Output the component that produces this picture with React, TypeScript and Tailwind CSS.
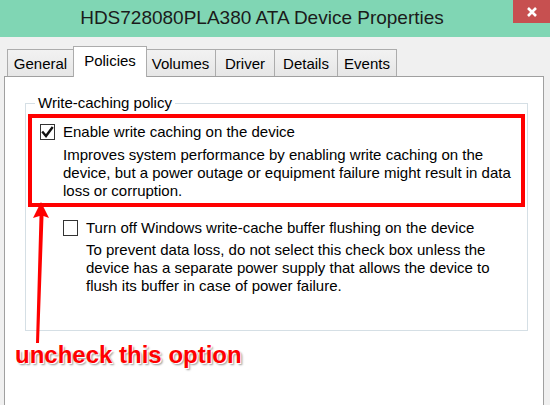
import React from "react";

const font = { fontFamily: '"Segoe UI", "Liberation Sans", Arial, sans-serif' };

function Tab({ label, active, w }: { label: string; active?: boolean; w: string }) {
  if (active) {
    return (
      <div
        className={`${w} h-[31px] -ml-px -mr-px z-10 bg-white border border-b-0 border-[#acacac] flex items-start justify-center pt-[3px] text-[15px] text-black`}
      >
        {label}
      </div>
    );
  }
  return (
    <div
      className={`${w} h-[28px] -ml-px border border-b-0 border-[#acacac] bg-gradient-to-b from-[#f2f2f2] to-[#e6e6e6] flex items-center justify-center pt-[1px] text-[15px] text-black`}
    >
      {label}
    </div>
  );
}

function CheckBox({ checked }: { checked?: boolean }) {
  return (
    <div className="w-[15px] h-[16px] border border-[#333] bg-white flex items-center justify-center shrink-0">
      {checked && (
        <svg width="13" height="13" viewBox="0 0 13 13">
          <path d="M2 6.5 L5 10 L11 2" fill="none" stroke="#111" strokeWidth="2.4" strokeLinecap="square" />
        </svg>
      )}
    </div>
  );
}

export default function App() {
  return (
    <div className="w-[550px] h-[405px] overflow-hidden bg-[#f0f0f0] relative flex flex-col" style={font}>
      {/* Title bar */}
      <div className="h-[37px] bg-[#80d6b4] flex items-center justify-center shrink-0 relative">
        <span className="text-[19px] text-[#1b1b1b] pr-[26px]">HDS728080PLA380 ATA Device Properties</span>
        <div className="absolute right-0 top-0 w-[37px] h-[23px] bg-[#c75050] flex items-center justify-center">
          <svg width="12" height="12" viewBox="0 0 12 12">
            <path d="M2 2 L10 10 M10 2 L2 10" stroke="#fff" strokeWidth="2.6" />
          </svg>
        </div>
      </div>

      <div className="flex-1 flex flex-col pt-[10px] pl-[4px] pr-[6px]">
        {/* Tabs */}
        <div className="flex items-end pl-[4px] h-[30px] -mb-px relative">
          <Tab label="General" w="w-[67px]" />
          <Tab label="Policies" w="w-[74px]" active />
          <Tab label="Volumes" w="w-[71px]" />
          <Tab label="Driver" w="w-[60px]" />
          <Tab label="Details" w="w-[64px]" />
          <Tab label="Events" w="w-[60px]" />
        </div>

        {/* Panel */}
        <div className="flex-1 bg-white border border-b-0 border-[#a0a0a0] pl-[20px] pr-[15px] pt-[17px] relative">
          <fieldset className="border border-[#d5dfe5] px-[2px] pt-[1px] pb-[35px]">
            <legend className="ml-[7px] px-[3px] text-[15px] text-black leading-[18px]">Write-caching policy</legend>
            <div className="border-4 border-[#ff0000] mt-[1px] pl-[8px] pt-[5px] pb-[3px] text-[15px] text-black">
              <div className="flex items-center gap-[8px] h-[18px]">
                <CheckBox checked />
                <span>Enable write caching on the device</span>
              </div>
              <div className="pl-[23px] pt-[5px] leading-[18px]">
                Improves system performance by enabling write caching on the
                <br />
                device, but a power outage or equipment failure might result in data
                <br />
                loss or corruption.
              </div>
            </div>
            <div className="pl-[35px] pt-[12px] text-[15px] text-black">
              <div className="flex items-center gap-[8px] h-[18px]">
                <CheckBox />
                <span>Turn off Windows write-cache buffer flushing on the device</span>
              </div>
              <div className="pl-[23px] pt-[4px] leading-[18px]">
                To prevent data loss, do not select this check box unless the
                <br />
                device has a separate power supply that allows the device to
                <br />
                flush its buffer in case of power failure.
              </div>
            </div>
          </fieldset>

          <div
            className="mt-[10px] -ml-[10px] text-[24px] font-bold text-[#ff0000] leading-[28px]"
            style={{ fontFamily: '"Liberation Sans", Arial, sans-serif', textShadow: "1px 1px 0 #fff, 2px 2px 2px #999" }}
          >
            uncheck this option
          </div>
        </div>
      </div>

      {/* Arrow annotation */}
      <svg className="absolute left-0 top-0 pointer-events-none" width="550" height="405">
        <path d="M41 202 L49 218 L43.5 216 L39 343 L36 343 L39.5 216 L33 218 Z" fill="#ff0000" />
      </svg>
    </div>
  );
}
